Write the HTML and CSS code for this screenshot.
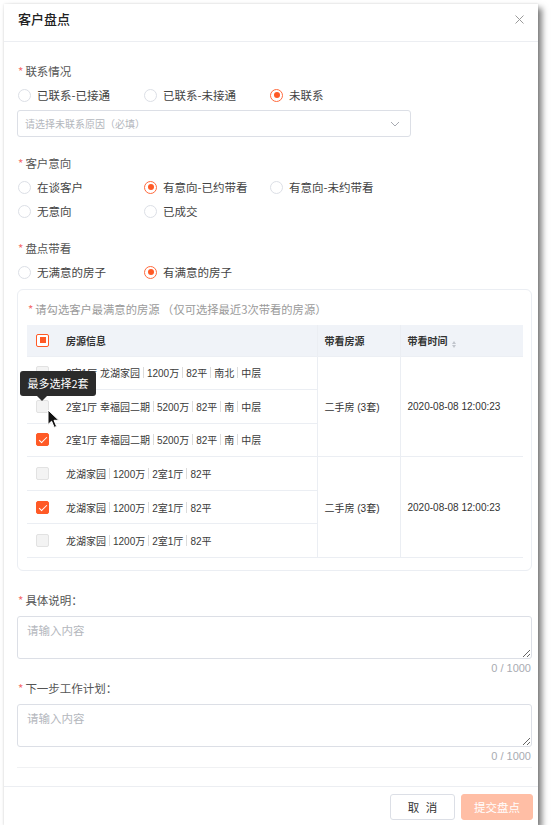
FILE: index.html
```html
<!DOCTYPE html>
<html lang="zh-CN">
<head>
<meta charset="utf-8">
<title>客户盘点</title>
<link rel="stylesheet" href="styles.css">
</head>
<body>
<div class="modal">
  <div class="modal-header">
    <div class="title">客户盘点</div>
    <svg class="close" width="9" height="9" viewBox="0 0 9 9"><path d="M0.5 0.5L8.5 8.5M8.5 0.5L0.5 8.5" stroke="#9a9a9a" stroke-width="1"/></svg>
  </div>
  <div class="modal-body">
    <div class="label label-first"><span class="req">*</span>联系情况</div>
    <div class="radios">
      <label class="radio"><span class="circle"></span>已联系-已接通</label>
      <label class="radio"><span class="circle"></span>已联系-未接通</label>
      <label class="radio"><span class="circle on"></span>未联系</label>
    </div>
    <div class="select">
      <span class="placeholder">请选择未联系原因（必填）</span>
      <svg width="10" height="6" viewBox="0 0 10 6"><path d="M1 1L5 5L9 1" fill="none" stroke="#a8abb2" stroke-width="1"/></svg>
    </div>

    <div class="label label-sec"><span class="req">*</span>客户意向</div>
    <div class="radios">
      <label class="radio"><span class="circle"></span>在谈客户</label>
      <label class="radio"><span class="circle on"></span>有意向-已约带看</label>
      <label class="radio"><span class="circle"></span>有意向-未约带看</label>
      <label class="radio"><span class="circle"></span>无意向</label>
      <label class="radio"><span class="circle"></span>已成交</label>
    </div>

    <div class="label label-sec3"><span class="req">*</span>盘点带看</div>
    <div class="radios">
      <label class="radio"><span class="circle"></span>无满意的房子</label>
      <label class="radio"><span class="circle on"></span>有满意的房子</label>
    </div>

    <div class="card">
      <div class="note"><span class="req">*</span>请勾选客户最满意的房源 （仅可选择最近3次带看的房源）</div>
      <table class="houses">
        <colgroup><col class="c1"><col class="c2"><col class="c3"><col class="c4"></colgroup>
        <thead>
          <tr>
            <th><span class="cb cb-half"></span></th>
            <th>房源信息</th>
            <th class="vl">带看房源</th>
            <th class="vl">带看时间 <span class="sort"><i class="up"></i><i class="down"></i></span></th>
          </tr>
        </thead>
        <tbody>
          <tr>
            <td><span class="cb"></span></td>
            <td class="info">2室1厅 龙湖家园<span class="sep"></span>1200万<span class="sep"></span>82平<span class="sep"></span>南北<span class="sep"></span>中层</td>
            <td class="vl" rowspan="3">二手房 (3套)</td>
            <td class="vl" rowspan="3">2020-08-08 12:00:23</td>
          </tr>
          <tr>
            <td><span class="cb"></span></td>
            <td class="info">2室1厅 幸福园二期<span class="sep"></span>5200万<span class="sep"></span>82平<span class="sep"></span>南<span class="sep"></span>中层</td>
          </tr>
          <tr>
            <td><span class="cb checked"></span></td>
            <td class="info">2室1厅 幸福园二期<span class="sep"></span>5200万<span class="sep"></span>82平<span class="sep"></span>南<span class="sep"></span>中层</td>
          </tr>
          <tr>
            <td><span class="cb"></span></td>
            <td class="info">龙湖家园<span class="sep"></span>1200万<span class="sep"></span>2室1厅<span class="sep"></span>82平</td>
            <td class="vl" rowspan="3">二手房 (3套)</td>
            <td class="vl" rowspan="3">2020-08-08 12:00:23</td>
          </tr>
          <tr>
            <td><span class="cb checked"></span></td>
            <td class="info">龙湖家园<span class="sep"></span>1200万<span class="sep"></span>2室1厅<span class="sep"></span>82平</td>
          </tr>
          <tr>
            <td><span class="cb"></span></td>
            <td class="info">龙湖家园<span class="sep"></span>1200万<span class="sep"></span>2室1厅<span class="sep"></span>82平</td>
          </tr>
        </tbody>
      </table>
      <div class="tooltip">最多选择2套</div>
      <svg class="cursor" width="14" height="20" viewBox="0 0 14 20"><path d="M1 1L1 15.5L4.6 12.2L7.2 18.4L9.6 17.4L7 11.3L11.8 11.3Z" fill="#111" stroke="#fff" stroke-width="1" stroke-linejoin="round"/></svg>
    </div>

    <div class="label label-ta"><span class="req">*</span>具体说明：</div>
    <textarea class="ta" placeholder="请输入内容"></textarea>
    <div class="count">0 / 1000</div>

    <div class="label label-ta2"><span class="req">*</span>下一步工作计划：</div>
    <textarea class="ta" placeholder="请输入内容"></textarea>
    <div class="count count-last">0 / 1000</div>
  </div>
  <div class="modal-footer">
    <button class="btn btn-cancel">取 消</button>
    <button class="btn btn-submit">提交盘点</button>
  </div>
</div>
</body>
</html>
```
FILE: styles.css
```css
* { box-sizing: border-box; margin: 0; padding: 0; }
body {
  background: #fff;
  font-family: "Noto Sans CJK SC", "Noto Sans", sans-serif;
  color: #333;
  font-size: 11.5px;
}
.modal {
  position: relative;
  margin: 4px 0 0 4px;
  width: 534px;
  height: 821px;
  background: #fff;
  box-shadow: 0 0 2px rgba(0,0,0,0.12), 4px 4px 6px rgba(0,0,0,0.5);
  display: flex;
  flex-direction: column;
}
.modal-header {
  height: 38px;
  border-bottom: 1px solid #eceef2;
  display: flex;
  justify-content: space-between;
  align-items: flex-start;
  padding: 7px 14px 0 14px;
}
.title {
  font-size: 13px;
  line-height: 16px;
  font-weight: 500;
  color: #222;
}
.close { margin-top: 4px; }
.modal-body {
  flex: 1;
  padding: 0 6px 0 13px;
}
.label {
  line-height: 16px;
  color: #555;
  padding-left: 1px;
}
.req { color: #f56c6c; margin-right: 2px; }
.label-first { margin-top: 21px; }
.label-sec { margin-top: 18px; }
.label-sec3 { margin-top: 21px; }
.radios {
  margin-top: 8px;
  display: grid;
  grid-template-columns: 126px 126px 126px;
  row-gap: 8px;
}
.radio {
  display: flex;
  align-items: center;
  height: 16px;
  line-height: 16px;
  color: #444;
  padding-left: 1px;
}
.circle {
  width: 13px;
  height: 13px;
  border: 1px solid #dcdfe6;
  border-radius: 50%;
  margin-right: 6px;
  background: #fff;
  display: flex;
  align-items: center;
  justify-content: center;
}
.circle.on { border-color: #ff6a3d; }
.circle.on::after {
  content: "";
  width: 6px;
  height: 6px;
  border-radius: 50%;
  background: #ff5a26;
}
.select {
  margin-top: 7px;
  width: 394px;
  height: 27px;
  border: 1px solid #dcdfe6;
  border-radius: 3px;
  display: flex;
  align-items: center;
  justify-content: space-between;
  padding: 0 10px 0 7px;
}
.placeholder { color: #b4b7bd; font-size: 10px; }
.card {
  position: relative;
  margin-top: 9px;
  width: 515px;
  height: 282px;
  border: 1px solid #ebeef3;
  border-radius: 6px;
  padding: 11px 8px 0 9px;
}
.note {
  line-height: 16px;
  font-size: 11.3px;
  color: #9a9a9a;
  padding-left: 1px;
}
.houses {
  margin-top: 8px;
  width: 496px;
  border-collapse: collapse;
  table-layout: fixed;
  font-family: "Liberation Sans", "Noto Sans CJK SC", sans-serif;
  font-size: 10px;
}
.c1 { width: 30px; }
.c2 { width: 260px; }
.c3 { width: 83px; }
.c4 { width: 123px; }
.houses th {
  height: 31px;
  background: #f0f3f8;
  text-align: left;
  font-weight: 700;
  color: #333;
  padding-left: 9px;
  border-bottom: 1px solid #eceff4;
}
.houses th.vl, .houses td.vl {
  border-left: 1px solid #ebeef3;
  padding-left: 7px;
}
.houses td {
  height: 33.6px;
  border-bottom: 1px solid #ebeef3;
  padding-left: 9px;
  color: #333;
  white-space: nowrap;
}
.houses td.info { padding-left: 9px; color: #3a3a3a; }
.sep {
  display: inline-block;
  width: 1px;
  height: 11px;
  background: #dcdcdc;
  margin: 0 3px;
  vertical-align: -1px;
}
.cb {
  display: block;
  width: 13px;
  height: 13px;
  border: 1px solid #e2e2e2;
  border-radius: 2px;
  background: #f3f3f3;
  position: relative;
}
.cb.checked {
  background: #ff5a26;
  border-color: #ff5a26;
}
.cb.checked::after {
  content: "";
  position: absolute;
  left: 3.5px;
  top: 1px;
  width: 3px;
  height: 7px;
  border: solid #fff;
  border-width: 0 1.5px 1.5px 0;
  transform: rotate(45deg);
}
.cb-half {
  background: #fff;
  border-color: #ff5a26;
}
.cb-half::after {
  content: "";
  position: absolute;
  left: 2.5px;
  top: 2.5px;
  width: 6px;
  height: 6px;
  background: #ff5a26;
}
.sort {
  display: inline-flex;
  flex-direction: column;
  gap: 1px;
  vertical-align: 1px;
  margin-left: 2px;
}
.sort i {
  display: block;
  width: 0;
  height: 0;
  border-left: 2.5px solid transparent;
  border-right: 2.5px solid transparent;
}
.sort .up { border-bottom: 3px solid #c0c4cc; }
.sort .down { border-top: 3px solid #c0c4cc; }
.tooltip {
  position: absolute;
  left: 2px;
  top: 81px;
  width: 76px;
  height: 25px;
  background: #2b2b2b;
  color: #fff;
  border-radius: 3px;
  font-size: 11px;
  line-height: 25px;
  text-align: center;
}
.tooltip::after {
  content: "";
  position: absolute;
  left: 17px;
  bottom: -5px;
  border-left: 5px solid transparent;
  border-right: 5px solid transparent;
  border-top: 5px solid #2b2b2b;
}
.cursor {
  position: absolute;
  left: 29px;
  top: 119px;
}
.label-ta { margin-top: 21px; }
.label-ta2 { margin-top: 3px; }
.ta {
  display: block;
  margin-top: 8px;
  width: 515px;
  height: 43px;
  border: 1px solid #dcdfe6;
  border-radius: 3px;
  padding: 5px 9px;
  font-family: "Noto Sans CJK SC", sans-serif;
  font-size: 11.5px;
  line-height: 16px;
  color: #333;
  resize: vertical;
  outline: none;
}
.ta::placeholder { color: #b4b7bd; }
.count {
  width: 515px;
  text-align: right;
  font-family: "Liberation Sans", Arial, sans-serif;
  font-size: 11px;
  line-height: 18px;
  color: #a8abb2;
  padding-right: 1px;
}
.count-last {
  padding-bottom: 2px;
  border-bottom: 1px solid #f0f1f3;
}
.modal-footer {
  height: 39px;
  border-top: 1px solid #eceef2;
  display: flex;
  justify-content: flex-end;
  align-items: flex-start;
  gap: 6px;
  padding: 7px 5px 0 0;
}
.btn {
  height: 26px;
  border-radius: 3px;
  font-family: "Noto Sans CJK SC", sans-serif;
  font-size: 11.5px;
  border: 1px solid #dcdfe6;
  background: #fff;
  color: #333;
}
.btn-cancel { width: 65px; letter-spacing: 2px; padding-left: 2px; }
.btn-submit {
  width: 72px;
  background: #ffbea5;
  border-color: #ffbea5;
  color: #fff;
}
```
